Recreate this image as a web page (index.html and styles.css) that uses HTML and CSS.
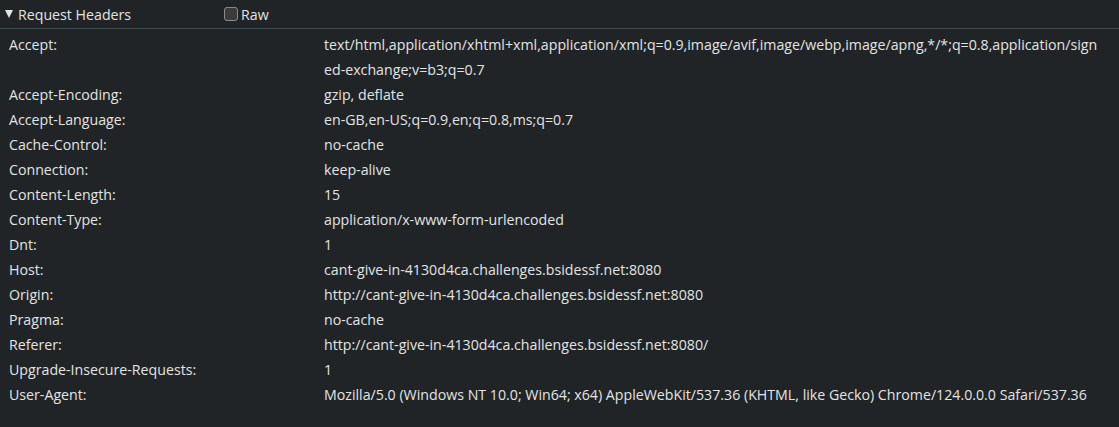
FILE: index.html
```html
<!DOCTYPE html>
<html>
<head><meta charset="utf-8"><link rel="stylesheet" href="styles.css"></head>
<body>
<div class="panel">
  <div class="head">
    <div class="title"><span class="tri"></span>Request Headers</div>
    <label class="raw"><span class="box"></span>Raw</label>
  </div>
  <div class="rows">
    <div class="k">Accept:</div><div class="v">text/html,application/xhtml+xml,application/xml;q=0.9,image/avif,image/webp,image/apng,*/*;q=0.8,application/signed-exchange;v=b3;q=0.7</div>
    <div class="k">Accept-Encoding:</div><div class="v">gzip, deflate</div>
    <div class="k">Accept-Language:</div><div class="v">en-GB,en-US;q=0.9,en;q=0.8,ms;q=0.7</div>
    <div class="k">Cache-Control:</div><div class="v">no-cache</div>
    <div class="k">Connection:</div><div class="v">keep-alive</div>
    <div class="k">Content-Length:</div><div class="v">15</div>
    <div class="k">Content-Type:</div><div class="v">application/x-www-form-urlencoded</div>
    <div class="k">Dnt:</div><div class="v">1</div>
    <div class="k">Host:</div><div class="v">cant-give-in-4130d4ca.challenges.bsidessf.net:8080</div>
    <div class="k">Origin:</div><div class="v">http://cant-give-in-4130d4ca.challenges.bsidessf.net:8080</div>
    <div class="k">Pragma:</div><div class="v">no-cache</div>
    <div class="k">Referer:</div><div class="v">http://cant-give-in-4130d4ca.challenges.bsidessf.net:8080/</div>
    <div class="k">Upgrade-Insecure-Requests:</div><div class="v">1</div>
    <div class="k">User-Agent:</div><div class="v">Mozilla/5.0 (Windows NT 10.0; Win64; x64) AppleWebKit/537.36 (KHTML, like Gecko) Chrome/124.0.0.0 Safari/537.36</div>
  </div>
</div>
</body>
</html>
```
FILE: styles.css
```css
html, body { margin: 0; padding: 0; background: #202427; }
body { width: 1119px; height: 427px; overflow: hidden; font-family: "Open Sans", "Noto Sans", sans-serif; font-size: 14.2px; color: #e3e3e3; }
.panel { display: flex; flex-direction: column; }
.head { display: flex; align-items: center; height: 28px; border-bottom: 1px solid #3d4a4f; }
.title { display: flex; align-items: center; width: 224px; padding-left: 5px; box-sizing: border-box; }
.tri { width: 0; height: 0; border-left: 4.5px solid transparent; border-right: 4.5px solid transparent; border-top: 8px solid #e3e3e3; margin-right: 5px; }
.raw { display: flex; align-items: center; }
.box { width: 14px; height: 14px; border: 1px solid #8a8a8a; border-radius: 3px; background: #3b3b3b; margin-right: 3px; box-sizing: border-box; }
.rows { display: grid; grid-template-columns: 315px 776px; padding: 3px 0 0 9px; line-height: 25px; }
.v { word-break: break-all; }
```
